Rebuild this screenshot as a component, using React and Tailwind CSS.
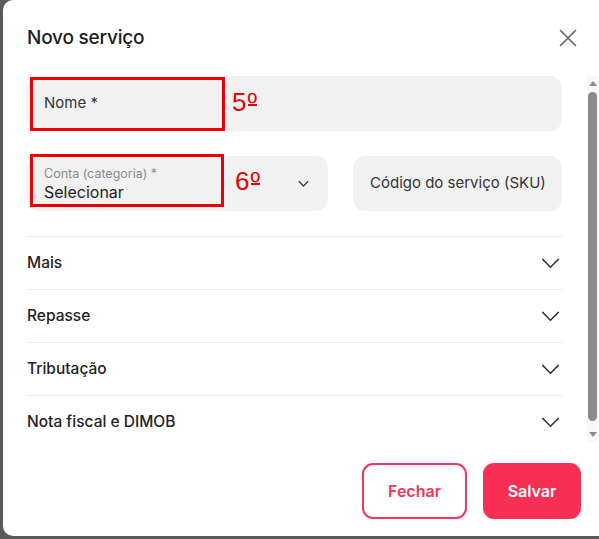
import React from "react";

const Chevron = ({ className = "", sw = 1.6 }) => (
  <svg viewBox="0 0 20 12" className={className} fill="none" stroke="currentColor" strokeWidth={sw} strokeLinecap="round" strokeLinejoin="round">
    <path d="M1.5 1.5 L10 10 L18.5 1.5" />
  </svg>
);

const Row = ({ label }) => (
  <div className="flex h-[53px] items-center justify-between border-t border-[#ececec]">
    <span className="text-[15.5px] font-medium text-[#222]">{label}</span>
    <Chevron className="mr-[2px] h-[11px] w-[19px] text-[#333]" />
  </div>
);

const Ordinal = ({ n, className }) => (
  <span className={`absolute flex text-[26px] leading-[30px] text-[#ee0000] ${className}`} style={{ fontFamily: "'Liberation Sans', sans-serif" }}>
    <span>{n}</span>
    <span className="relative ml-[1px]">
      º
      <span className="absolute left-[1px] right-[0px] top-[17px] h-[2px] bg-[#ee0000]" />
    </span>
  </span>
);

export default function App() {
  return (
    <div className="h-[539px] w-[599px] overflow-hidden bg-[#5a5a5a]" style={{ fontFamily: "Inter, 'Noto Sans', sans-serif" }}>
      <div className="ml-[3px] flex h-[536px] w-[606px] flex-col rounded-[10px] bg-white">
        <div className="flex h-[76px] items-start justify-between pl-[24px] pr-[32px] pt-[24px]">
          <h1 className="text-[19px] font-medium tracking-[-0.2px] text-[#1d1d1d]">Novo serviço</h1>
          <svg viewBox="0 0 18 18" className="mt-[5px] h-[18px] w-[18px] text-[#666]" fill="none" stroke="currentColor" strokeWidth="1.6" strokeLinecap="round">
            <path d="M1.5 1.5 L16.5 16.5 M16.5 1.5 L1.5 16.5" />
          </svg>
        </div>
        <div className="flex h-[368px]">
          <div className="ml-[24px] w-[535px] overflow-hidden">
            <div className="relative flex h-[55px] items-center rounded-[12px] bg-[#f1f1f1] pl-[17px]">
              <span className="text-[15px] text-[#333]">Nome *</span>
              <div className="absolute left-[3px] top-[1px] h-[54px] w-[195px] border-[3px] border-[#ee0000]" />
              <Ordinal n="5" className="left-[205px] top-[11px]" />
            </div>
            <div className="mt-[25px] flex gap-[25px]">
              <div className="relative flex h-[55px] w-[301px] items-center justify-between rounded-[12px] bg-[#f1f1f1] pl-[17px] pr-[19px]">
                <div className="flex flex-col">
                  <span className="text-[12.5px] leading-[16px] text-[#8a8a8a]">Conta (categoria) *</span>
                  <span className="text-[16px] leading-[20px] text-[#222]">Selecionar</span>
                </div>
                <Chevron className="h-[6px] w-[11px] text-[#333]" sw={2.4} />
                <div className="absolute left-[3px] top-[-2px] h-[53px] w-[194px] border-[3px] border-[#ee0000]" />
                <Ordinal n="6" className="left-[208px] top-[10px]" />
              </div>
              <div className="flex h-[55px] flex-1 items-center rounded-[12px] bg-[#f1f1f1] pl-[17px]">
                <span className="text-[15px] text-[#333]">Código do serviço (SKU)</span>
              </div>
            </div>
            <div className="mt-[25px]">
              <Row label="Mais" />
              <Row label="Repasse" />
              <Row label="Tributação" />
              <Row label="Nota fiscal e DIMOB" />
            </div>
          </div>
          <div className="ml-[25px] flex h-[366px] w-[11px] flex-col items-center bg-[#f8f8f8]">
            <svg viewBox="0 0 8 5" className="mt-[5px] h-[5px] w-[8px] text-[#8a8a8a]"><path d="M0 5 L4 0 L8 5 Z" fill="currentColor" /></svg>
            <div className="mt-[6px] h-[329px] w-[9px] rounded-[5px] bg-[#8b8b8b]" />
            <svg viewBox="0 0 8 5" className="mt-[11px] h-[5px] w-[8px] text-[#8a8a8a]"><path d="M0 0 L4 5 L8 0 Z" fill="currentColor" /></svg>
          </div>
        </div>
        <div className="ml-[359px] mt-[19px] flex gap-[16px]">
          <button className="h-[56px] w-[105px] rounded-[11px] border-2 border-[#f7345a] text-[16px] font-semibold text-[#f7345a]">Fechar</button>
          <button className="h-[56px] w-[98px] rounded-[11px] bg-[#f72f55] text-[16px] font-semibold text-white">Salvar</button>
        </div>
      </div>
    </div>
  );
}
